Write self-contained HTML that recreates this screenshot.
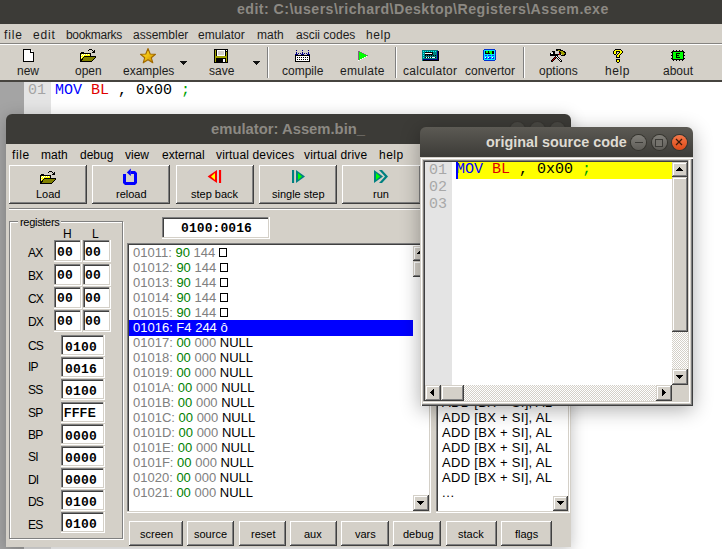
<!DOCTYPE html>
<html><head><meta charset="utf-8">
<style>
*{margin:0;padding:0;box-sizing:border-box}
html,body{width:722px;height:549px;overflow:hidden;background:#fff;position:relative;font-family:"Liberation Sans",sans-serif}
.a{position:absolute}
.t{position:absolute;white-space:pre;line-height:1}
.tb{background:#3c3b37}
.face{background:#d4d0c8}
.btn{position:absolute;background:#d4d0c8;box-shadow:inset -1px -1px #404040,inset 1px 1px #fff,inset -2px -2px #808080}
.sunk{position:absolute;background:#fff;box-shadow:inset -1px -1px #fff,inset -2px -2px #d4d0c8,inset 1px 1px #808080,inset 2px 2px #404040}
.sbtn{position:absolute;background:#d4d0c8;box-shadow:inset -1px -1px #404040,inset 1px 1px #d4d0c8,inset -2px -2px #808080,inset 2px 2px #fff}
.ui{font-size:12px;color:#1c1c1c}
.w{font-size:11px;color:#000}
.mono{font-family:"Liberation Mono",monospace}
.circ{position:absolute;width:15px;height:15px;border-radius:50%}
</style></head><body>

<!-- main title bar -->
<div class="a tb" style="left:0;top:0;width:722px;height:24px"></div>
<div class="t" style="left:237px;top:2px;font-size:14.2px;letter-spacing:0.45px;font-weight:bold;color:#8c8983">edit: C:\users\richard\Desktop\Registers\Assem.exe</div>

<!-- menu bar -->
<div class="a face" style="left:0;top:24px;width:722px;height:19px"></div>
<div class="a" style="left:0;top:43px;width:722px;height:1px;background:#858380"></div>
<div class="a" style="left:0;top:44px;width:722px;height:1px;background:#fff"></div>
<div class="t ui" style="left:4px;top:29px;letter-spacing:0.9px">file</div>
<div class="t ui" style="left:33px;top:29px;letter-spacing:0.8px">edit</div>
<div class="t ui" style="left:66px;top:29px;letter-spacing:-0.3px">bookmarks</div>
<div class="t ui" style="left:133px;top:29px">assembler</div>
<div class="t ui" style="left:198px;top:29px">emulator</div>
<div class="t ui" style="left:257px;top:29px">math</div>
<div class="t ui" style="left:296px;top:29px">ascii codes</div>
<div class="t ui" style="left:366px;top:29px;letter-spacing:0.6px">help</div>

<!-- toolbar -->
<div class="a face" style="left:0;top:45px;width:722px;height:35px"></div>
<div class="a" style="left:0;top:80px;width:722px;height:2px;background:#46443f"></div>


<!-- toolbar labels -->
<div class="t ui" style="left:17px;top:65px">new</div>
<div class="t ui" style="left:75px;top:65px">open</div>
<div class="t ui" style="left:123px;top:65px">examples</div>
<div class="t ui" style="left:209px;top:65px">save</div>
<div class="t ui" style="left:282px;top:65px">compile</div>
<div class="t ui" style="left:340px;top:65px;letter-spacing:0.3px">emulate</div>
<div class="t ui" style="left:403px;top:65px;letter-spacing:0.3px">calculator</div>
<div class="t ui" style="left:465px;top:65px">convertor</div>
<div class="t ui" style="left:539px;top:65px">options</div>
<div class="t ui" style="left:605px;top:65px;letter-spacing:0.6px">help</div>
<div class="t ui" style="left:663px;top:65px">about</div>
<div class="a" style="left:267px;top:47px;width:1px;height:31px;background:#808080;box-shadow:1px 0 #fff"></div>
<div class="a" style="left:395px;top:47px;width:1px;height:31px;background:#808080;box-shadow:1px 0 #fff"></div>
<div class="a" style="left:523px;top:47px;width:1px;height:31px;background:#808080;box-shadow:1px 0 #fff"></div>

<!-- ICONS -->
<svg class="a" style="left:20px;top:46px" width="20" height="18" viewBox="0 0 20 18" shape-rendering="crispEdges">
<path d="M4,4H10V7H13V15H4Z" fill="#fff"/>
<rect x="3" y="3" width="8" height="1"/><rect x="3" y="3" width="1" height="13"/><rect x="3" y="15" width="11" height="1"/><rect x="13" y="6" width="1" height="10"/>
<rect x="10" y="3" width="1" height="4"/><rect x="10" y="6" width="4" height="1"/><rect x="11" y="4" width="1" height="1" fill="#fff"/><rect x="12" y="5" width="1" height="1" fill="#fff"/><rect x="11" y="5" width="1" height="1" fill="#fff"/>
</svg>
<svg class="a" style="left:78px;top:46px" width="20" height="18" viewBox="0 0 20 18" shape-rendering="crispEdges">
<path d="M2,7H3V6H6V7H13V10H18V11L13,16H2Z"/>
<path d="M3,8H12V10H6L4,13H3Z" fill="#ffff00"/>
<path d="M6,11H17L13,15H4Z" fill="#808000"/>
<rect x="4" y="8" width="1" height="1" fill="#fff"/><rect x="6" y="8" width="1" height="1" fill="#fff"/><rect x="8" y="8" width="1" height="1" fill="#fff"/><rect x="10" y="8" width="1" height="1" fill="#fff"/>
<rect x="3" y="9" width="1" height="1" fill="#fff"/><rect x="5" y="9" width="1" height="1" fill="#fff"/><rect x="3" y="11" width="1" height="1" fill="#fff"/>
<rect x="10" y="4" width="1" height="1"/><rect x="11" y="3" width="3" height="1"/><rect x="14" y="4" width="1" height="1"/><rect x="16" y="4" width="1" height="3"/><rect x="15" y="5" width="1" height="2"/><rect x="14" y="6" width="1" height="1"/>
</svg>
<svg class="a" style="left:138px;top:46px" width="20" height="18" viewBox="0 0 20 18">
<defs><linearGradient id="sg" x1="0" y1="0" x2="1" y2="1"><stop offset="0" stop-color="#ffe040"/><stop offset="0.5" stop-color="#f0c010"/><stop offset="1" stop-color="#c08000"/></linearGradient></defs>
<polygon points="10,2.5 12.2,8 17.5,8.3 13.3,11.7 14.8,16.8 10,13.8 5.2,16.8 6.7,11.7 2.5,8.3 7.8,8" fill="url(#sg)" stroke="#a06800" stroke-width="1.1" stroke-linejoin="round"/>
</svg>
<svg class="a" style="left:210px;top:46px" width="20" height="18" viewBox="0 0 20 18" shape-rendering="crispEdges">
<rect x="4" y="3" width="14" height="14"/>
<rect x="5" y="4" width="1" height="12" fill="#a0a000"/><rect x="16" y="6" width="1" height="10" fill="#a0a000"/>
<rect x="5" y="10" width="12" height="2" fill="#a0a000"/>
<rect x="7" y="4" width="8" height="6" fill="#fff"/><rect x="8" y="5" width="6" height="4" fill="#d4d0c8"/>
<rect x="13" y="13" width="2" height="3" fill="#fff"/><rect x="16" y="4" width="1" height="1" fill="#fff"/>
</svg>
<svg class="a" style="left:293px;top:46px" width="20" height="18" viewBox="0 0 20 18" shape-rendering="crispEdges">
<g fill="#000080"><rect x="3" y="4" width="1" height="1"/><rect x="9" y="4" width="1" height="1"/><rect x="15" y="4" width="1" height="1"/>
<rect x="3" y="6" width="1" height="3"/><rect x="9" y="6" width="1" height="3"/><rect x="15" y="6" width="1" height="3"/>
<rect x="5" y="7" width="1" height="1"/><rect x="7" y="7" width="1" height="1"/><rect x="11" y="7" width="1" height="1"/><rect x="13" y="7" width="1" height="1"/>
<rect x="2" y="8" width="3" height="1"/><rect x="8" y="8" width="3" height="1"/><rect x="14" y="8" width="3" height="1"/></g>
<rect x="2" y="9" width="15" height="7"/><rect x="3" y="10" width="13" height="5" fill="#fff"/>
<g><rect x="4" y="11" width="1" height="1"/><rect x="6" y="11" width="1" height="1"/><rect x="8" y="11" width="1" height="1"/><rect x="10" y="11" width="1" height="1"/><rect x="12" y="11" width="1" height="1"/><rect x="14" y="11" width="1" height="1"/>
<rect x="4" y="13" width="1" height="1"/><rect x="6" y="13" width="1" height="1"/><rect x="8" y="13" width="1" height="1"/><rect x="10" y="13" width="1" height="1"/><rect x="12" y="13" width="1" height="1"/><rect x="14" y="13" width="1" height="1"/></g>
</svg>
<svg class="a" style="left:352px;top:46px" width="20" height="18" viewBox="0 0 20 18" shape-rendering="crispEdges">
<path d="M6,5H8V6H10V7H12V8H14V9H16V10H14V11H12V12H10V13H8V14H6Z" fill="#00ff00"/>
<rect x="6" y="5" width="1" height="9" fill="#806080"/><path d="M6,5H8V6H10V7H12V8H14V9H16V10H15V9H13V8H11V7H9V6H7Z" fill="#806080"/>
<path d="M6,14H8V13H10V12H12V11H14V10H15V11H13V12H11V13H9V14H7V15H6Z" fill="#fff"/>
</svg>
<svg class="a" style="left:420px;top:46px" width="20" height="18" viewBox="0 0 20 18" shape-rendering="crispEdges">
<rect x="2" y="4" width="16" height="11" fill="#008080"/>
<rect x="3" y="13" width="15" height="2" fill="#000080"/><rect x="17" y="5" width="1" height="9" fill="#000080"/>
<rect x="3" y="14" width="15" height="1"/><rect x="18" y="5" width="1" height="10"/>
<g fill="#00ffff"><rect x="3" y="5" width="1" height="1"/><rect x="5" y="5" width="1" height="1"/><rect x="7" y="5" width="1" height="1"/><rect x="9" y="5" width="1" height="1"/><rect x="11" y="5" width="1" height="1"/><rect x="13" y="5" width="1" height="1"/><rect x="15" y="5" width="1" height="1"/>
<rect x="3" y="7" width="1" height="1"/><rect x="3" y="9" width="1" height="1"/><rect x="3" y="11" width="1" height="1"/></g>
<rect x="5" y="6" width="8" height="3"/><rect x="5" y="7" width="7" height="1" fill="#fff"/>
<g><rect x="5" y="9" width="1" height="1"/><rect x="7" y="9" width="1" height="1"/><rect x="9" y="9" width="1" height="1"/><rect x="11" y="9" width="1" height="1"/><rect x="13" y="9" width="1" height="1"/><rect x="15" y="9" width="1" height="1"/>
<rect x="5" y="11" width="1" height="1"/><rect x="7" y="11" width="1" height="1"/><rect x="9" y="11" width="1" height="1"/><rect x="11" y="11" width="1" height="1"/><rect x="15" y="11" width="1" height="1"/></g>
<rect x="6" y="11" width="1" height="1" fill="#fff"/><rect x="8" y="11" width="1" height="1" fill="#fff"/><rect x="10" y="11" width="1" height="1" fill="#fff"/><rect x="12" y="11" width="3" height="1" fill="#fff"/>
</svg>
<svg class="a" style="left:480px;top:46px" width="20" height="18" viewBox="0 0 20 18" shape-rendering="crispEdges">
<path d="M4,3H15V4H16V14H15V15H4V14H3V4H4Z" fill="#0030d0"/>
<rect x="4" y="4" width="11" height="10" fill="#00e8ff"/>
<rect x="5" y="5" width="9" height="3"/>
<g fill="#00ff00"><rect x="6" y="5" width="1" height="2"/><rect x="6" y="6" width="2" height="1"/><rect x="7" y="5" width="1" height="2"/><rect x="9" y="5" width="1" height="2"/><rect x="9" y="6" width="2" height="1"/><rect x="10" y="5" width="1" height="3"/><rect x="11" y="5" width="1" height="3"/></g>
<g fill="#0030ff"><rect x="5" y="9" width="2" height="1"/><rect x="8" y="9" width="3" height="1"/><rect x="12" y="9" width="2" height="1"/>
<rect x="5" y="11" width="2" height="2"/><rect x="8" y="11" width="3" height="2"/><rect x="12" y="11" width="2" height="2"/></g>
<rect x="5" y="11" width="1" height="1" fill="#fff"/><rect x="8" y="11" width="1" height="1" fill="#fff"/><rect x="12" y="11" width="1" height="1" fill="#fff"/>
</svg>
<svg class="a" style="left:549px;top:47px" width="18" height="16" viewBox="0 0 18 16" shape-rendering="crispEdges"><rect x="7" y="2" width="5" height="1" fill="#000"/><rect x="7" y="3" width="2" height="1" fill="#000"/><rect x="9" y="3" width="2" height="1" fill="#a0a000"/><rect x="11" y="3" width="3" height="1" fill="#000"/><rect x="3" y="4" width="3" height="1" fill="#000"/><rect x="10" y="4" width="1" height="1" fill="#000"/><rect x="11" y="4" width="3" height="1" fill="#a0a000"/><rect x="14" y="4" width="2" height="1" fill="#000"/><rect x="4" y="5" width="2" height="1" fill="#000"/><rect x="10" y="5" width="2" height="1" fill="#000"/><rect x="12" y="5" width="3" height="1" fill="#a0a000"/><rect x="15" y="5" width="2" height="1" fill="#000"/><rect x="1" y="6" width="1" height="1" fill="#000"/><rect x="2" y="6" width="2" height="1" fill="#fff"/><rect x="4" y="6" width="2" height="1" fill="#000"/><rect x="10" y="6" width="1" height="1" fill="#c00000"/><rect x="11" y="6" width="1" height="1" fill="#000"/><rect x="12" y="6" width="4" height="1" fill="#a0a000"/><rect x="16" y="6" width="1" height="1" fill="#000"/><rect x="1" y="7" width="9" height="1" fill="#000"/><rect x="10" y="7" width="1" height="1" fill="#c00000"/><rect x="11" y="7" width="1" height="1" fill="#000"/><rect x="13" y="7" width="2" height="1" fill="#a0a000"/><rect x="15" y="7" width="2" height="1" fill="#000"/><rect x="1" y="8" width="8" height="1" fill="#000"/><rect x="12" y="8" width="4" height="1" fill="#000"/><rect x="6" y="9" width="1" height="1" fill="#000"/><rect x="7" y="9" width="1" height="1" fill="#fff"/><rect x="8" y="9" width="1" height="1" fill="#000"/><rect x="5" y="10" width="1" height="1" fill="#000"/><rect x="6" y="10" width="1" height="1" fill="#c00000"/><rect x="7" y="10" width="1" height="1" fill="#000"/><rect x="8" y="10" width="1" height="1" fill="#fff"/><rect x="9" y="10" width="1" height="1" fill="#000"/><rect x="4" y="11" width="1" height="1" fill="#000"/><rect x="5" y="11" width="1" height="1" fill="#c00000"/><rect x="6" y="11" width="1" height="1" fill="#000"/><rect x="8" y="11" width="1" height="1" fill="#000"/><rect x="9" y="11" width="1" height="1" fill="#fff"/><rect x="10" y="11" width="1" height="1" fill="#000"/><rect x="3" y="12" width="1" height="1" fill="#000"/><rect x="4" y="12" width="1" height="1" fill="#c00000"/><rect x="5" y="12" width="1" height="1" fill="#000"/><rect x="9" y="12" width="1" height="1" fill="#000"/><rect x="10" y="12" width="1" height="1" fill="#fff"/><rect x="11" y="12" width="1" height="1" fill="#000"/><rect x="2" y="13" width="1" height="1" fill="#000"/><rect x="3" y="13" width="1" height="1" fill="#c00000"/><rect x="4" y="13" width="1" height="1" fill="#000"/><rect x="10" y="13" width="1" height="1" fill="#000"/><rect x="11" y="13" width="1" height="1" fill="#fff"/><rect x="12" y="13" width="1" height="1" fill="#000"/><rect x="2" y="14" width="2" height="1" fill="#000"/><rect x="11" y="14" width="2" height="1" fill="#000"/></svg>
<svg class="a" style="left:608px;top:46px" width="20" height="18" viewBox="0 0 20 18" shape-rendering="crispEdges"><rect x="7" y="3" width="6" height="1" fill="#000"/><rect x="6" y="4" width="1" height="1" fill="#000"/><rect x="7" y="4" width="6" height="1" fill="#ffff00"/><rect x="13" y="4" width="1" height="1" fill="#000"/><rect x="5" y="5" width="1" height="1" fill="#000"/><rect x="6" y="5" width="2" height="1" fill="#ffff00"/><rect x="8" y="5" width="4" height="1" fill="#000"/><rect x="12" y="5" width="2" height="1" fill="#ffff00"/><rect x="14" y="5" width="1" height="1" fill="#000"/><rect x="5" y="6" width="1" height="1" fill="#000"/><rect x="6" y="6" width="2" height="1" fill="#ffff00"/><rect x="8" y="6" width="1" height="1" fill="#000"/><rect x="11" y="6" width="1" height="1" fill="#000"/><rect x="12" y="6" width="2" height="1" fill="#ffff00"/><rect x="14" y="6" width="1" height="1" fill="#000"/><rect x="5" y="7" width="1" height="1" fill="#000"/><rect x="6" y="7" width="2" height="1" fill="#ffff00"/><rect x="8" y="7" width="1" height="1" fill="#000"/><rect x="10" y="7" width="1" height="1" fill="#000"/><rect x="11" y="7" width="2" height="1" fill="#ffff00"/><rect x="13" y="7" width="1" height="1" fill="#000"/><rect x="6" y="8" width="2" height="1" fill="#000"/><rect x="9" y="8" width="1" height="1" fill="#000"/><rect x="10" y="8" width="2" height="1" fill="#ffff00"/><rect x="12" y="8" width="1" height="1" fill="#000"/><rect x="8" y="9" width="1" height="1" fill="#000"/><rect x="9" y="9" width="2" height="1" fill="#ffff00"/><rect x="11" y="9" width="1" height="1" fill="#000"/><rect x="8" y="10" width="1" height="1" fill="#000"/><rect x="9" y="10" width="2" height="1" fill="#ffff00"/><rect x="11" y="10" width="1" height="1" fill="#000"/><rect x="8" y="11" width="4" height="1" fill="#000"/><rect x="8" y="13" width="4" height="1" fill="#000"/><rect x="8" y="14" width="1" height="1" fill="#000"/><rect x="9" y="14" width="2" height="1" fill="#ffff00"/><rect x="11" y="14" width="1" height="1" fill="#000"/><rect x="8" y="15" width="1" height="1" fill="#000"/><rect x="9" y="15" width="2" height="1" fill="#ffff00"/><rect x="11" y="15" width="1" height="1" fill="#000"/><rect x="9" y="16" width="2" height="1" fill="#000"/></svg>
<svg class="a" style="left:668px;top:46px" width="20" height="18" viewBox="0 0 20 18" shape-rendering="crispEdges">
<rect x="4" y="5" width="12" height="9"/>
<rect x="5" y="6" width="10" height="7" fill="#00ff00"/>
<g><rect x="5" y="4" width="1" height="1"/><rect x="8" y="4" width="1" height="1"/><rect x="11" y="4" width="1" height="1"/><rect x="14" y="4" width="1" height="1"/>
<rect x="5" y="14" width="1" height="1"/><rect x="8" y="14" width="1" height="1"/><rect x="11" y="14" width="1" height="1"/><rect x="14" y="14" width="1" height="1"/>
<rect x="3" y="6" width="1" height="1"/><rect x="3" y="9" width="1" height="1"/><rect x="3" y="12" width="1" height="1"/>
<rect x="16" y="6" width="1" height="1"/><rect x="16" y="9" width="1" height="1"/><rect x="16" y="12" width="1" height="1"/></g>
<path d="M8,7H12V8H9V9H11V10H9V11H12V12H8Z"/>
</svg>
<!-- dropdown arrows -->
<svg class="a" style="left:180px;top:61px" width="8" height="5" viewBox="0 0 8 5" shape-rendering="crispEdges"><path d="M0,0H7V1H6V2H5V3H4V4H3V3H2V2H1V1H0Z" fill="#111"/></svg>
<svg class="a" style="left:253px;top:61px" width="8" height="5" viewBox="0 0 8 5" shape-rendering="crispEdges"><path d="M0,0H7V1H6V2H5V3H4V4H3V3H2V2H1V1H0Z" fill="#111"/></svg>

<!-- editor -->
<div class="a" style="left:0;top:82px;width:24px;height:467px;background:#a4a4a4"></div>
<div class="a" style="left:24px;top:82px;width:27px;height:467px;background:#e4e4e4"></div>
<div class="t mono" style="left:28px;top:83px;font-size:15px;color:#a4a4a4">01</div>
<div class="t mono" style="left:55px;top:83px;font-size:15px"><span style="color:#0000ff">MOV</span> <span style="color:#e00000">BL</span> , 0x00 <span style="color:#00a000">;</span></div>

<!-- emulator window -->
<div class="a" style="left:6px;top:114px;width:565px;height:433px;background:linear-gradient(#3c3b37 0,#3c3b37 30px,#d4d0c8 30px);border-radius:6px 6px 0 0;box-shadow:0 3px 16px rgba(0,0,0,.25)"></div>
<div class="circ" style="left:510px;top:121.5px;background:#4a4944;box-shadow:0 0 0 1px #383733"></div>
<div class="circ" style="left:530px;top:121.5px;background:#4a4944;box-shadow:0 0 0 1px #383733"></div>
<div class="circ" style="left:550px;top:121.5px;background:#4a4944;box-shadow:0 0 0 1px #383733"></div>
<div class="t" style="left:211px;top:122px;font-size:14.8px;font-weight:bold;color:#8c8983">emulator: Assem.bin_</div>

<!-- emulator menu -->
<div class="t w" style="left:12px;top:149px;font-size:12px;letter-spacing:0.6px">file</div>
<div class="t w" style="left:41px;top:149px;font-size:12px">math</div>
<div class="t w" style="left:80px;top:149px;font-size:12px">debug</div>
<div class="t w" style="left:125px;top:149px;font-size:12px">view</div>
<div class="t w" style="left:162px;top:149px;font-size:12px">external</div>
<div class="t w" style="left:216px;top:149px;font-size:12px;letter-spacing:0.15px">virtual devices</div>
<div class="t w" style="left:304px;top:149px;font-size:12px;letter-spacing:0.15px">virtual drive</div>
<div class="t w" style="left:379px;top:149px;font-size:12px;letter-spacing:0.5px">help</div>

<!-- emulator buttons -->
<div class="btn" style="left:9px;top:165px;width:78px;height:39px"></div>
<div class="btn" style="left:92px;top:165px;width:78px;height:39px"></div>
<div class="btn" style="left:176px;top:165px;width:78px;height:39px"></div>
<div class="btn" style="left:259px;top:165px;width:78px;height:39px"></div>
<div class="btn" style="left:342px;top:165px;width:79px;height:39px"></div>
<div class="t w" style="left:36px;top:189px">Load</div>
<div class="t w" style="left:116px;top:189px">reload</div>
<div class="t w" style="left:191px;top:189px">step back</div>
<div class="t w" style="left:272px;top:189px">single step</div>
<div class="t w" style="left:373px;top:189px">run</div>

<!-- emulator button icons -->
<svg class="a" style="left:38px;top:168px" width="20" height="18" viewBox="0 0 20 18" shape-rendering="crispEdges">
<path d="M2,7H3V6H6V7H13V10H18V11L13,16H2Z"/>
<path d="M3,8H12V10H6L4,13H3Z" fill="#ffff00"/>
<path d="M6,11H17L13,15H4Z" fill="#808000"/>
<rect x="4" y="8" width="1" height="1" fill="#fff"/><rect x="6" y="8" width="1" height="1" fill="#fff"/><rect x="8" y="8" width="1" height="1" fill="#fff"/><rect x="10" y="8" width="1" height="1" fill="#fff"/>
<rect x="3" y="9" width="1" height="1" fill="#fff"/><rect x="5" y="9" width="1" height="1" fill="#fff"/><rect x="3" y="11" width="1" height="1" fill="#fff"/>
<rect x="10" y="4" width="1" height="1"/><rect x="11" y="3" width="3" height="1"/><rect x="14" y="4" width="1" height="1"/><rect x="16" y="4" width="1" height="3"/><rect x="15" y="5" width="1" height="2"/><rect x="14" y="6" width="1" height="1"/>
</svg>
<svg class="a" style="left:120px;top:168px" width="20" height="18" viewBox="0 0 20 18">
<path d="M3,6H6V14H14V6H11V3H15L17,5V15L15,17H5L3,15Z" fill="#0000ff"/>
<polygon points="6.8,4.4 10.8,0.6 10.8,8" fill="#0000ff"/>
</svg>
<svg class="a" style="left:204px;top:168px" width="20" height="18" viewBox="0 0 20 18">
<polygon points="3.6,8.5 13,2 13,15" fill="#ff0000"/>
<polygon points="7,8.5 11,5 11,12" fill="#ffff00"/>
<rect x="15" y="2" width="2.1" height="13" fill="#ff0000"/>
</svg>
<svg class="a" style="left:288px;top:168px" width="20" height="18" viewBox="0 0 20 18">
<rect x="4" y="2" width="2.1" height="13" fill="#008080"/>
<polygon points="8,2 17,8.5 8,15" fill="#008080"/>
<polygon points="10,5 14,8.5 10,12" fill="#00ff00"/>
</svg>
<svg class="a" style="left:371px;top:168px" width="20" height="18" viewBox="0 0 20 18">
<polygon points="3,2 12,8.5 3,15" fill="#008080"/>
<polygon points="5,5 9,8.5 5,12" fill="#00ff00"/>
<polygon points="8,2 11,2 17,8.5 11,15 8,15 14,8.5" fill="#008080"/>
</svg>


<!-- separator -->
<div class="a" style="left:9px;top:208px;width:559px;height:1px;background:#808080"></div>
<div class="a" style="left:9px;top:209px;width:559px;height:1px;background:#fff"></div>

<!-- registers group -->
<div class="a" style="left:9px;top:221px;width:114px;height:318px;border:1px solid #808080;box-shadow:inset 1px 1px #fff,1px 1px #fff"></div>
<div class="t w" style="left:18px;top:217px;padding:0 2px;background:#d4d0c8;font-size:11px;letter-spacing:-0.3px">registers</div>

<div class="t w" style="left:63px;top:228px;font-size:12px">H</div>
<div class="t w" style="left:92px;top:228px;font-size:12px">L</div>
<div class="t w" style="left:28px;top:247px;font-size:12px;letter-spacing:-0.8px">AX</div>
<div class="sunk" style="left:54px;top:240px;width:28px;height:22px"></div>
<div class="sunk" style="left:83px;top:240px;width:28px;height:22px"></div>
<div class="t mono" style="left:57px;top:246px;font-size:13px;letter-spacing:0.2px;font-weight:bold">00</div>
<div class="t mono" style="left:85px;top:246px;font-size:13px;letter-spacing:0.2px;font-weight:bold">00</div>
<div class="t w" style="left:28px;top:270px;font-size:12px;letter-spacing:-0.8px">BX</div>
<div class="sunk" style="left:54px;top:264px;width:28px;height:22px"></div>
<div class="sunk" style="left:83px;top:264px;width:28px;height:22px"></div>
<div class="t mono" style="left:57px;top:269px;font-size:13px;letter-spacing:0.2px;font-weight:bold">00</div>
<div class="t mono" style="left:85px;top:269px;font-size:13px;letter-spacing:0.2px;font-weight:bold">00</div>
<div class="t w" style="left:28px;top:293px;font-size:12px;letter-spacing:-0.8px">CX</div>
<div class="sunk" style="left:54px;top:287px;width:28px;height:22px"></div>
<div class="sunk" style="left:83px;top:287px;width:28px;height:22px"></div>
<div class="t mono" style="left:57px;top:292px;font-size:13px;letter-spacing:0.2px;font-weight:bold">00</div>
<div class="t mono" style="left:85px;top:292px;font-size:13px;letter-spacing:0.2px;font-weight:bold">00</div>
<div class="t w" style="left:28px;top:316px;font-size:12px;letter-spacing:-0.8px">DX</div>
<div class="sunk" style="left:54px;top:310px;width:28px;height:22px"></div>
<div class="sunk" style="left:83px;top:310px;width:28px;height:22px"></div>
<div class="t mono" style="left:57px;top:315px;font-size:13px;letter-spacing:0.2px;font-weight:bold">00</div>
<div class="t mono" style="left:85px;top:315px;font-size:13px;letter-spacing:0.2px;font-weight:bold">00</div>
<div class="t w" style="left:28px;top:340px;font-size:12px;letter-spacing:-0.8px">CS</div>
<div class="sunk" style="left:61px;top:335px;width:44px;height:21px"></div>
<div class="t mono" style="left:65px;top:341px;font-size:13px;letter-spacing:0.2px;font-weight:bold">0100</div>
<div class="t w" style="left:28px;top:361px;font-size:12px;letter-spacing:-0.8px">IP</div>
<div class="sunk" style="left:61px;top:357px;width:44px;height:21px"></div>
<div class="t mono" style="left:65px;top:363px;font-size:13px;letter-spacing:0.2px;font-weight:bold">0016</div>
<div class="t w" style="left:28px;top:384px;font-size:12px;letter-spacing:-0.8px">SS</div>
<div class="sunk" style="left:61px;top:379px;width:44px;height:21px"></div>
<div class="t mono" style="left:65px;top:385px;font-size:13px;letter-spacing:0.2px;font-weight:bold">0100</div>
<div class="t w" style="left:28px;top:407px;font-size:12px;letter-spacing:-0.8px">SP</div>
<div class="sunk" style="left:61px;top:402px;width:44px;height:21px"></div>
<div class="t" style="left:64px;top:407px;font-size:12px;letter-spacing:0.6px;font-weight:bold">FFFE</div>
<div class="t w" style="left:28px;top:429px;font-size:12px;letter-spacing:-0.8px">BP</div>
<div class="sunk" style="left:61px;top:424px;width:44px;height:21px"></div>
<div class="t mono" style="left:65px;top:430px;font-size:13px;letter-spacing:0.2px;font-weight:bold">0000</div>
<div class="t w" style="left:28px;top:451px;font-size:12px;letter-spacing:-0.8px">SI</div>
<div class="sunk" style="left:61px;top:446px;width:44px;height:21px"></div>
<div class="t mono" style="left:65px;top:452px;font-size:13px;letter-spacing:0.2px;font-weight:bold">0000</div>
<div class="t w" style="left:28px;top:474px;font-size:12px;letter-spacing:-0.8px">DI</div>
<div class="sunk" style="left:61px;top:468px;width:44px;height:21px"></div>
<div class="t mono" style="left:65px;top:474px;font-size:13px;letter-spacing:0.2px;font-weight:bold">0000</div>
<div class="t w" style="left:28px;top:496px;font-size:12px;letter-spacing:-0.8px">DS</div>
<div class="sunk" style="left:61px;top:490px;width:44px;height:21px"></div>
<div class="t mono" style="left:65px;top:496px;font-size:13px;letter-spacing:0.2px;font-weight:bold">0100</div>
<div class="t w" style="left:28px;top:519px;font-size:12px;letter-spacing:-0.8px">ES</div>
<div class="sunk" style="left:61px;top:512px;width:44px;height:21px"></div>
<div class="t mono" style="left:65px;top:518px;font-size:13px;letter-spacing:0.2px;font-weight:bold">0100</div>

<!-- address -->
<div class="sunk" style="left:162px;top:217px;width:108px;height:22px"></div>
<div class="t mono" style="left:181px;top:222px;font-size:13px;letter-spacing:0.08px;font-weight:bold">0100:0016</div>

<!-- memory list -->
<div class="sunk" style="left:127px;top:243px;width:304px;height:270px"></div>

<div class="t" style="left:133px;top:246px;font-size:13px;color:#808080">01011: <span style="color:#008000">90</span> 144 <span style="display:inline-block;width:8px;height:9px;border:1px solid #000;vertical-align:0px"></span></div>
<div class="t" style="left:133px;top:261px;font-size:13px;color:#808080">01012: <span style="color:#008000">90</span> 144 <span style="display:inline-block;width:8px;height:9px;border:1px solid #000;vertical-align:0px"></span></div>
<div class="t" style="left:133px;top:276px;font-size:13px;color:#808080">01013: <span style="color:#008000">90</span> 144 <span style="display:inline-block;width:8px;height:9px;border:1px solid #000;vertical-align:0px"></span></div>
<div class="t" style="left:133px;top:291px;font-size:13px;color:#808080">01014: <span style="color:#008000">90</span> 144 <span style="display:inline-block;width:8px;height:9px;border:1px solid #000;vertical-align:0px"></span></div>
<div class="t" style="left:133px;top:306px;font-size:13px;color:#808080">01015: <span style="color:#008000">90</span> 144 <span style="display:inline-block;width:8px;height:9px;border:1px solid #000;vertical-align:0px"></span></div>
<div class="a" style="left:129px;top:320px;width:284px;height:16px;background:#0000ff"></div>
<div class="t" style="left:133px;top:321px;font-size:13px;color:#fff">01016: F4 244 ô</div>
<div class="t" style="left:133px;top:336px;font-size:13px;color:#808080">01017: <span style="color:#008000">00</span> 000 <span style="color:#000">NULL</span></div>
<div class="t" style="left:133px;top:351px;font-size:13px;color:#808080">01018: <span style="color:#008000">00</span> 000 <span style="color:#000">NULL</span></div>
<div class="t" style="left:133px;top:366px;font-size:13px;color:#808080">01019: <span style="color:#008000">00</span> 000 <span style="color:#000">NULL</span></div>
<div class="t" style="left:133px;top:381px;font-size:13px;color:#808080">0101A: <span style="color:#008000">00</span> 000 <span style="color:#000">NULL</span></div>
<div class="t" style="left:133px;top:396px;font-size:13px;color:#808080">0101B: <span style="color:#008000">00</span> 000 <span style="color:#000">NULL</span></div>
<div class="t" style="left:133px;top:411px;font-size:13px;color:#808080">0101C: <span style="color:#008000">00</span> 000 <span style="color:#000">NULL</span></div>
<div class="t" style="left:133px;top:426px;font-size:13px;color:#808080">0101D: <span style="color:#008000">00</span> 000 <span style="color:#000">NULL</span></div>
<div class="t" style="left:133px;top:441px;font-size:13px;color:#808080">0101E: <span style="color:#008000">00</span> 000 <span style="color:#000">NULL</span></div>
<div class="t" style="left:133px;top:456px;font-size:13px;color:#808080">0101F: <span style="color:#008000">00</span> 000 <span style="color:#000">NULL</span></div>
<div class="t" style="left:133px;top:471px;font-size:13px;color:#808080">01020: <span style="color:#008000">00</span> 000 <span style="color:#000">NULL</span></div>
<div class="t" style="left:133px;top:486px;font-size:13px;color:#808080">01021: <span style="color:#008000">00</span> 000 <span style="color:#000">NULL</span></div>
<div class="sbtn" style="left:413px;top:246px;width:16px;height:15px"></div>
<div class="sbtn" style="left:413px;top:261px;width:16px;height:16px"></div>
<div class="sbtn" style="left:413px;top:495px;width:16px;height:16px"></div>
<svg class="a" style="left:417px;top:250px" width="7" height="4" viewBox="0 0 7 4" shape-rendering="crispEdges"><path d="M3,0H4V1H5V2H6V3H7V4H0V3H1V2H2V1H3Z"/></svg>
<svg class="a" style="left:417px;top:501px" width="7" height="4" viewBox="0 0 7 4" shape-rendering="crispEdges"><path d="M0,0H7V1H6V2H5V3H4V4H3V3H2V2H1V1H0Z"/></svg>

<!-- disasm list -->
<div class="sunk" style="left:436px;top:243px;width:134px;height:270px"></div>

<div class="t" style="left:442px;top:396px;font-size:13px;letter-spacing:0.3px;color:#000">ADD [BX + SI], AL</div>
<div class="t" style="left:442px;top:411px;font-size:13px;letter-spacing:0.3px;color:#000">ADD [BX + SI], AL</div>
<div class="t" style="left:442px;top:426px;font-size:13px;letter-spacing:0.3px;color:#000">ADD [BX + SI], AL</div>
<div class="t" style="left:442px;top:441px;font-size:13px;letter-spacing:0.3px;color:#000">ADD [BX + SI], AL</div>
<div class="t" style="left:442px;top:456px;font-size:13px;letter-spacing:0.3px;color:#000">ADD [BX + SI], AL</div>
<div class="t" style="left:442px;top:471px;font-size:13px;letter-spacing:0.3px;color:#000">ADD [BX + SI], AL</div>
<div class="t" style="left:442px;top:486px;font-size:13px;letter-spacing:0.6px;color:#000">...</div>
<div class="sbtn" style="left:553px;top:496px;width:15px;height:15px"></div>
<svg class="a" style="left:557px;top:501px" width="7" height="4" viewBox="0 0 7 4" shape-rendering="crispEdges"><path d="M0,0H7V1H6V2H5V3H4V4H3V3H2V2H1V1H0Z"/></svg>

<!-- bottom buttons -->
<div class="btn" style="left:129px;top:521px;width:54px;height:25px"></div>
<div class="btn" style="left:187px;top:521px;width:47px;height:25px"></div>
<div class="btn" style="left:239px;top:521px;width:47px;height:25px"></div>
<div class="btn" style="left:290px;top:521px;width:47px;height:25px"></div>
<div class="btn" style="left:341px;top:521px;width:48px;height:25px"></div>
<div class="btn" style="left:393px;top:521px;width:48px;height:25px"></div>
<div class="btn" style="left:446px;top:521px;width:51px;height:25px"></div>
<div class="btn" style="left:501px;top:521px;width:51px;height:25px"></div>

<div class="t w" style="left:140px;top:529px">screen</div>
<div class="t w" style="left:194px;top:529px">source</div>
<div class="t w" style="left:251px;top:529px">reset</div>
<div class="t w" style="left:304px;top:529px">aux</div>
<div class="t w" style="left:355px;top:529px">vars</div>
<div class="t w" style="left:403px;top:529px">debug</div>
<div class="t w" style="left:458px;top:529px">stack</div>
<div class="t w" style="left:515px;top:529px">flags</div>

<!-- source window -->
<div class="a" style="left:420px;top:127px;width:273px;height:279px;background:linear-gradient(#5c5a54 0,#3c3b37 30px,#d4d0c8 30px);border-radius:6px 6px 0 0;box-shadow:0 4px 20px rgba(0,0,0,.32)"></div>
<div class="circ" style="left:631.3px;top:134.8px;background:linear-gradient(#807e78,#5f5d58);box-shadow:0 0 0 1px #36352f"></div>
<div class="a" style="left:635px;top:141.5px;width:8px;height:1.6px;background:#3c3b37"></div>
<div class="circ" style="left:651.5px;top:134.8px;background:linear-gradient(#807e78,#5f5d58);box-shadow:0 0 0 1px #36352f"></div>
<div class="a" style="left:655px;top:138.5px;width:8px;height:8px;border:1.3px solid #3c3b37;background:#74726c"></div>
<div class="circ" style="left:671.6px;top:134.8px;background:linear-gradient(#f4784a,#dc4a18);box-shadow:0 0 0 1px #36352f"></div>
<svg class="a" style="left:674.2px;top:137px" width="10" height="10" viewBox="0 0 10 10"><path d="M2,2L8,8M8,2L2,8" stroke="#3a1a0a" stroke-width="1.2"/></svg>
<div class="t" style="left:486px;top:135px;font-size:14.4px;font-weight:bold;color:#dfdbd2">original source code</div>


<!-- source content -->
<div class="a" style="left:420px;top:157px;width:273px;height:249px;box-shadow:inset 1px 1px #d4d0c8,inset 2px 2px #fff,inset -1px -1px #404040,inset -2px -2px #808080"></div>
<div class="sunk" style="left:423px;top:160px;width:267px;height:243px"></div>
<div class="a" style="left:425px;top:162px;width:27px;height:223px;background:#e4e4e4"></div>
<div class="a" style="left:456px;top:162px;width:216px;height:17px;background:#ffff00"></div>
<div class="a" style="left:456px;top:162px;width:2px;height:17px;background:#0000ff"></div>
<div class="t mono" style="left:429px;top:162px;font-size:15px;line-height:17px;color:#a8a8a8">01
02
03</div>
<div class="t mono" style="left:456px;top:162px;font-size:15px"><span style="color:#0000ff">MOV</span> <span style="color:#e00000">BL</span> , 0x00 <span style="color:#00a000">;</span></div>
<div class="sbtn" style="left:672px;top:162px;width:16px;height:15px"></div>
<div class="sbtn" style="left:672px;top:177px;width:16px;height:155px"></div>
<div class="a" style="left:672px;top:332px;width:16px;height:37px;background:repeating-conic-gradient(#fff 0 25%,#d4d0c8 0 50%) 0 0/2px 2px"></div>
<div class="sbtn" style="left:672px;top:369px;width:16px;height:16px"></div>
<div class="sbtn" style="left:425px;top:385px;width:16px;height:16px"></div>
<div class="sbtn" style="left:441px;top:385px;width:23px;height:16px"></div>
<div class="a" style="left:464px;top:385px;width:192px;height:16px;background:repeating-conic-gradient(#fff 0 25%,#d4d0c8 0 50%) 0 0/2px 2px"></div>
<div class="sbtn" style="left:656px;top:385px;width:16px;height:16px"></div>
<div class="a" style="left:672px;top:385px;width:16px;height:16px;background:#d4d0c8"></div>

<!-- src arrows -->
<svg class="a" style="left:676px;top:167px" width="7" height="4" viewBox="0 0 7 4" shape-rendering="crispEdges"><path d="M3,0H4V1H5V2H6V3H7V4H0V3H1V2H2V1H3Z"/></svg>
<svg class="a" style="left:676px;top:375px" width="7" height="4" viewBox="0 0 7 4" shape-rendering="crispEdges"><path d="M0,0H7V1H6V2H5V3H4V4H3V3H2V2H1V1H0Z"/></svg>
<svg class="a" style="left:430px;top:389px" width="4" height="7" viewBox="0 0 4 7" shape-rendering="crispEdges"><path d="M0,3V4H1V5H2V6H3V7H4V0H3V1H2V2H1V3Z"/></svg>
<svg class="a" style="left:662px;top:389px" width="4" height="7" viewBox="0 0 4 7" shape-rendering="crispEdges"><path d="M0,0V7H1V6H2V5H3V4H4V3H3V2H2V1H1V0Z"/></svg>
</body></html>
